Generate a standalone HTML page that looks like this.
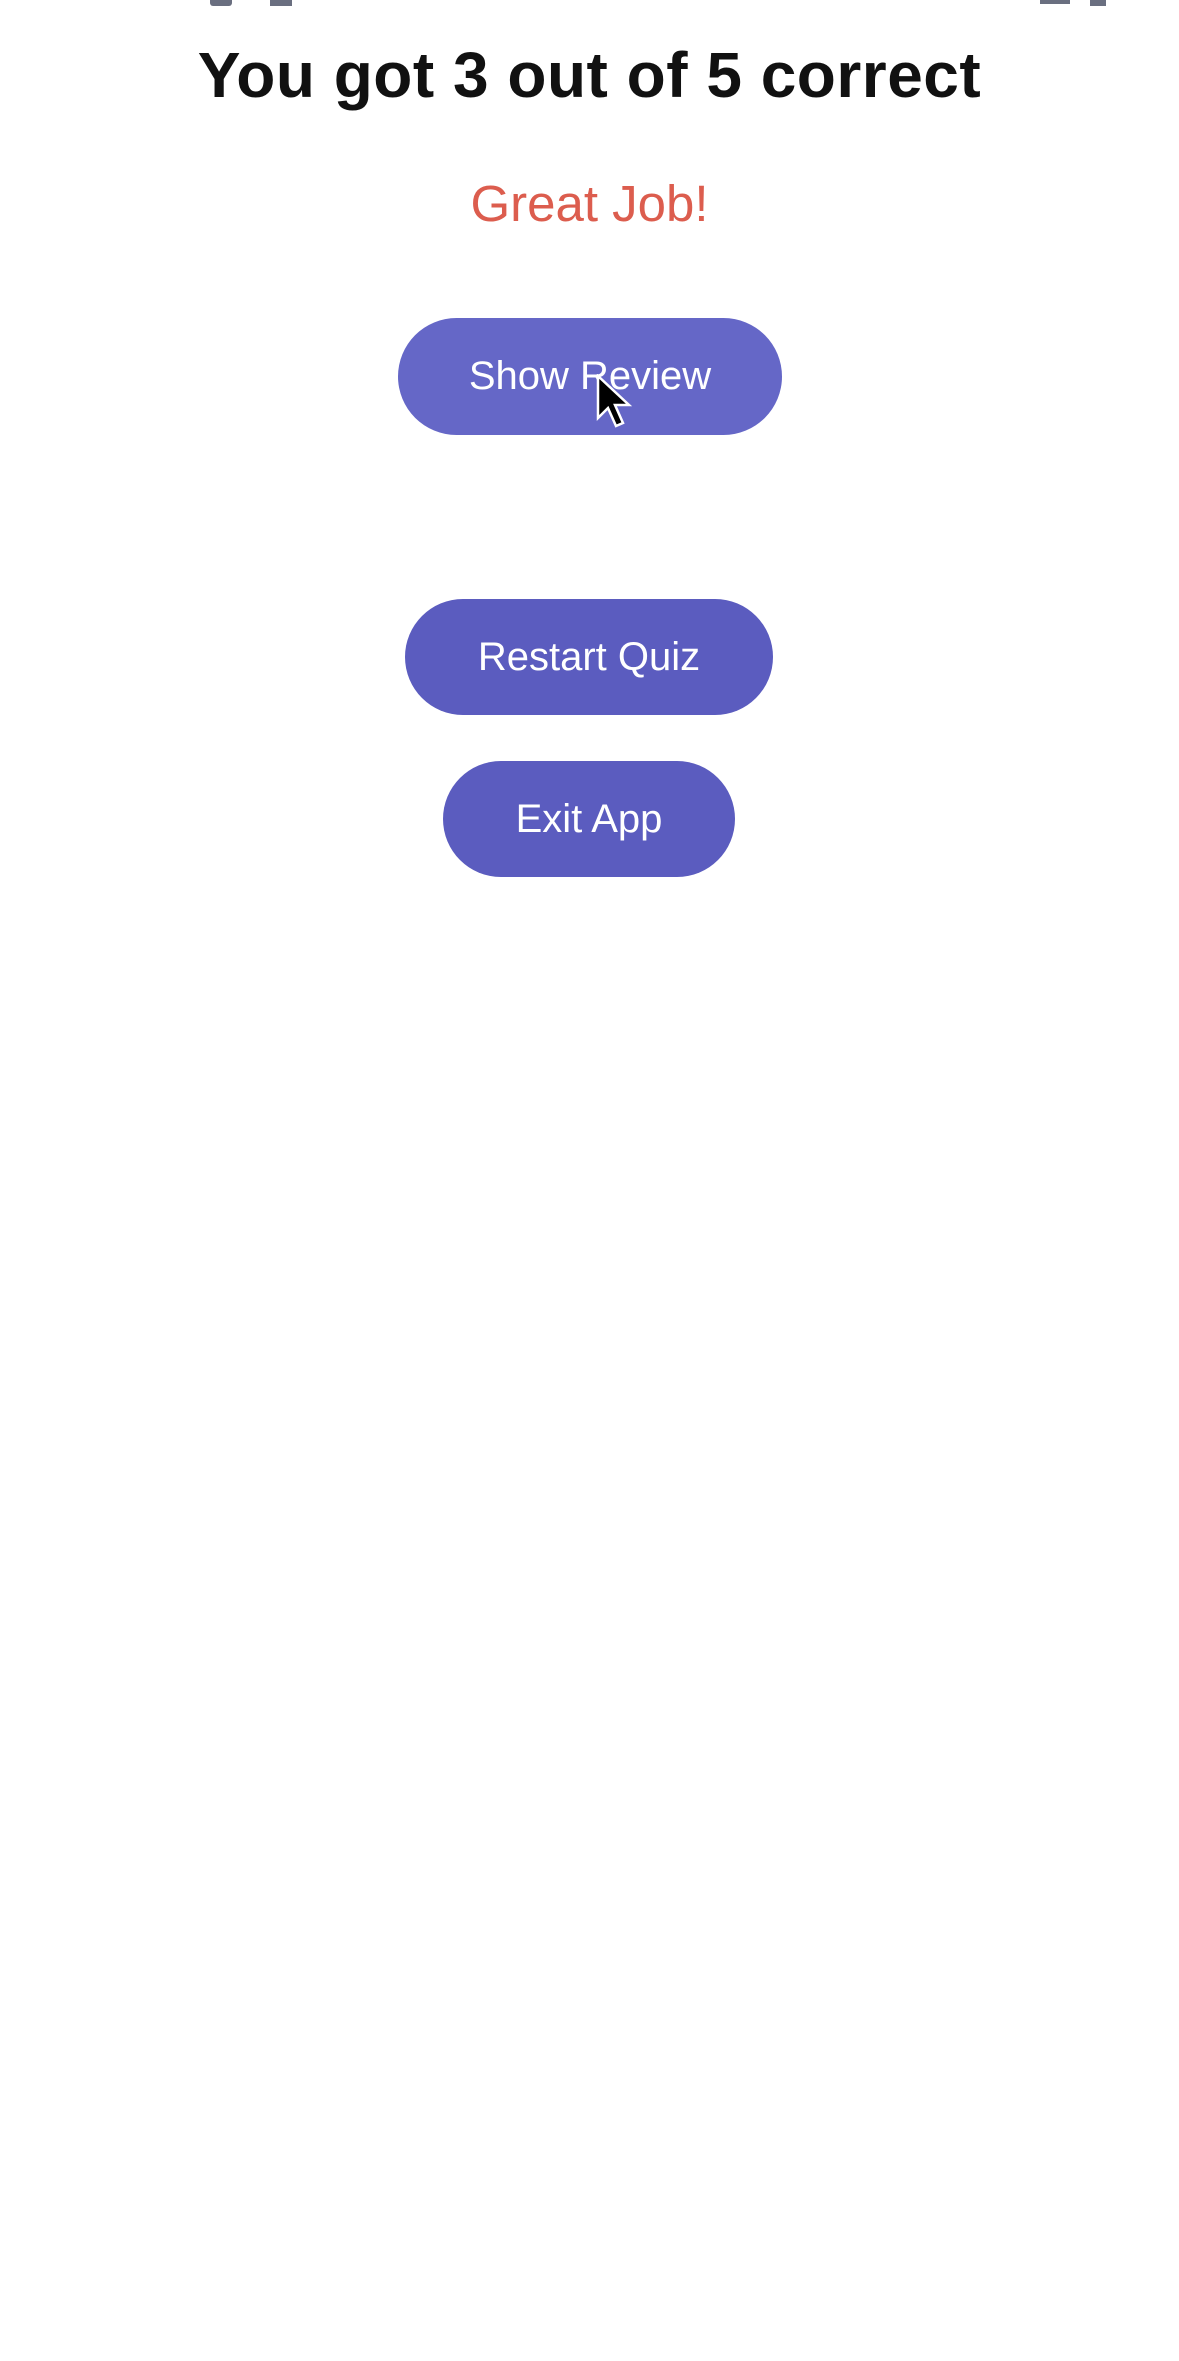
<!DOCTYPE html>
<html><head><meta charset="utf-8"><style>
html,body{margin:0;padding:0;background:#fff;}
body{width:1179px;height:2361px;position:relative;overflow:hidden;font-family:"Liberation Sans",sans-serif;}
.t{position:absolute;left:0;width:1179px;text-align:center;}
.b{position:absolute;border-radius:60px;color:#fff;font-size:40px;display:flex;align-items:center;justify-content:center;}
</style></head><body>
<div style="position:absolute;left:210px;top:-8px;width:22px;height:14px;background:#6a6f80;border-radius:3px;"></div>
<div style="position:absolute;left:270px;top:-8px;width:22px;height:14px;background:#6a6f80;"></div>
<div style="position:absolute;left:1040px;top:-8px;width:30px;height:12px;background:#6a6f80;"></div>
<div style="position:absolute;left:1090px;top:-8px;width:16px;height:14px;background:#6a6f80;"></div>
<div class="t" style="top:38px;font-size:64px;font-weight:bold;color:#111;letter-spacing:0.5px;">You got 3 out of 5 correct</div>
<div class="t" style="top:174px;font-size:51px;color:#dc5d4e;">Great Job!</div>
<div class="b" style="left:398px;top:318px;width:384px;height:117px;background:#6567c7;">Show Review</div>
<div class="b" style="left:405px;top:599px;width:368px;height:116px;background:#5b5cbf;">Restart Quiz</div>
<div class="b" style="left:443px;top:761px;width:292px;height:116px;background:#5b5cbf;">Exit App</div>
<svg style="position:absolute;left:596px;top:374px" width="40" height="60" viewBox="0 0 40 60"><path d="M2 2 L2 44 L12 34 L20 52 L27 49 L19 31 L33 31 Z" fill="#000" stroke="#fff" stroke-width="2.5"/></svg>
</body></html>
